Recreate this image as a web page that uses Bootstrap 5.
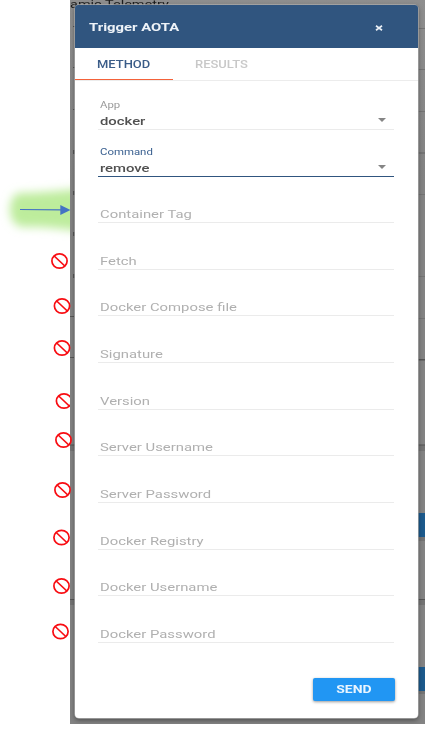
<!DOCTYPE html>
<html lang="en">
<head>
<meta charset="utf-8">
<meta name="viewport" content="width=device-width, initial-scale=1">
<title>Trigger AOTA</title>
<link rel="stylesheet" href="https://cdn.jsdelivr.net/npm/bootstrap@5.3.0/dist/css/bootstrap.min.css">
<style>
body{font-family:Roboto,"Liberation Sans",sans-serif;font-size:11px;line-height:1;background:#fff;width:437px;height:730px}
.backdrop-area{width:355px;height:724px;margin-left:70px;padding:5px 7px 0 4.5px;background:linear-gradient(#8e8e8e,#838383 25%,#838383)}
.stretch{display:inline-block;white-space:nowrap;transform:scaleX(1.35);transform-origin:0 50%}
.page-title{left:0;top:-1px;font-size:11.5px;color:#1c1c1c}
.page-title .stretch{transform:scaleX(1.26)}
.dialog-box{width:343px;height:712.5px;border-radius:4px;box-shadow:0 0 0 .7px #aaa,0 2px 5px rgba(0,0,0,.45)}
.dialog-head{height:43px;background:#30557f;color:#eef3f8;border-radius:3px 3px 0 0;padding:2px 35px 0 14px;font-weight:700}
.tab-strip{height:33px;border-bottom:1px solid #ececec}
.tab-item{width:98px;height:32px;color:#c8c8c8;font-weight:500}
.tab-item .stretch{transform:scaleX(1.18);transform-origin:50% 50%}
.send-btn .stretch{transform:scaleX(1.27);transform-origin:50% 50%}
.tab-item.active{color:#3a5c88;background:linear-gradient(#f4623a,#f4623a) bottom/100% 1px no-repeat}
.fields{padding:2.2px 24px 0 23px}
.field{height:46.67px;border-bottom:1px solid #ebebeb;padding:0 8px 2px 2px;color:#b0b0b0}
.field .caption{font-size:9.5px;color:#999;margin-bottom:6px;transform:scaleX(1.2)}
.field .val{color:#505050;font-weight:500}
.field.focused{border-bottom-color:#30557f}
.field.focused .caption{color:#3a6090}
.caret{border:4px solid transparent;border-top:4px solid #858585;border-bottom:0;margin-bottom:4.5px}
.send-btn{width:82px;height:23px;background:#2196f3;color:#e9f5ff;border-radius:2px;font-weight:700;box-shadow:0 1px 3px rgba(0,0,0,.4);margin:35px 23px 0 auto;border:0}
.marks{left:0;top:0}
.page-edge{left:0;top:0}
</style>
<script src="https://cdn.jsdelivr.net/npm/bootstrap@5.3.0/dist/js/bootstrap.bundle.min.js"></script>
</head>
<body class="position-relative overflow-hidden">
<main class="backdrop-area position-relative overflow-hidden">
  <svg class="page-edge position-absolute" width="355" height="724" aria-hidden="true">
    <g fill="#747474"><path d="M347 28h8v1h-8zM347 69h8v1h-8zM347 111h8v1h-8zM347 152h8v2h-8zM347 194h8v1h-8zM347 276h8v1h-8zM347 318h8v1h-8z"/>
    <path d="M0 445h5v6H0zM347 445h8v6h-8zM0 599h5v6H0zM347 599h8v6h-8zM347 537h8v4h-8zM347 691h8v3h-8z"/></g>
    <path fill="#555" d="M347 359h8v1.5h-8zM0 444.500h5v1H0zM347 444.500h8v1h-8zM0 599h5v1H0zM347 599h8v1h-8zM0 316h4v1H0zM0 357h4v1H0zM3 26h2v1H3zM3 67h2v1H3zM3 109h2v1H3zM3 150h2v4H3zM3 191h2v4H3zM3 232h2v4H3zM3 274h2v4H3z"/>
    <path fill="#1c5a8c" d="M347 513h8v24h-8zM347 667h8v24h-8z"/>
  </svg>
  <div class="page-title position-absolute"><span class="stretch">amic Telemetry</span></div>
  <section class="dialog-box bg-white position-relative">
    <header class="dialog-head d-flex align-items-center justify-content-between">
      <span class="stretch">Trigger AOTA</span>
      <svg width="8" height="6" viewBox="0 0 8 6" aria-label="Close"><path d="M1 .8 7 5.200M7 .8 1 5.200" stroke="#e8eef5" stroke-width="1.700"/></svg>
    </header>
    <nav class="tab-strip d-flex">
      <div class="tab-item active d-flex align-items-center justify-content-center"><span class="stretch">METHOD</span></div>
      <div class="tab-item d-flex align-items-center justify-content-center"><span class="stretch">RESULTS</span></div>
    </nav>
    <div class="fields">
      <div class="field d-flex align-items-end justify-content-between"><div class="d-flex flex-column"><span class="stretch caption">App</span><span class="stretch val">docker</span></div><span class="caret"></span></div>
      <div class="field focused d-flex align-items-end justify-content-between"><div class="d-flex flex-column"><span class="stretch caption">Command</span><span class="stretch val">remove</span></div><span class="caret"></span></div>
      <div class="field d-flex align-items-end"><span class="stretch">Container Tag</span></div>
      <div class="field d-flex align-items-end"><span class="stretch">Fetch</span></div>
      <div class="field d-flex align-items-end"><span class="stretch">Docker Compose file</span></div>
      <div class="field d-flex align-items-end"><span class="stretch">Signature</span></div>
      <div class="field d-flex align-items-end"><span class="stretch">Version</span></div>
      <div class="field d-flex align-items-end"><span class="stretch">Server Username</span></div>
      <div class="field d-flex align-items-end"><span class="stretch">Server Password</span></div>
      <div class="field d-flex align-items-end"><span class="stretch">Docker Registry</span></div>
      <div class="field d-flex align-items-end"><span class="stretch">Docker Username</span></div>
      <div class="field d-flex align-items-end"><span class="stretch">Docker Password</span></div>
    </div>
    <button class="send-btn d-flex align-items-center justify-content-center p-0"><span class="stretch">SEND</span></button>
  </section>
</main>
<svg class="marks position-absolute" width="75" height="730" aria-hidden="true">
  <defs>
    <filter id="soft" x="-30%" y="-50%" width="160%" height="200%"><feGaussianBlur stdDeviation="5"/></filter>
    <clipPath id="leftside"><path d="M0 0h70v730H0z"/></clipPath>
    <g id="ban" fill="none" stroke="#f80c12" stroke-width="1.700"><ellipse rx="7.600" ry="7.100"/><path d="M-5.300-5 5.300 5"/></g>
  </defs>
  <g clip-path="url(#leftside)"><path d="M20 193Q45 193 85 188V232Q45 226 22 227Q10 224 10 209Q11 194 20 193z" fill="#bdec9c" filter="url(#soft)"/></g>
  <path d="M20 209.500 62 209.800" stroke="#4472c4" stroke-width="1.200"/><path d="M60.300 205v10l10.200-5z" fill="#4472c4"/>
  <use href="#ban" x="59.500" y="261"/><use href="#ban" x="62" y="306"/><use href="#ban" x="62" y="348"/>
  <g clip-path="url(#leftside)"><use href="#ban" x="64" y="401"/></g>
  <use href="#ban" x="63.500" y="440"/><use href="#ban" x="62.500" y="490"/><use href="#ban" x="61.500" y="537.500"/><use href="#ban" x="61.500" y="586"/><use href="#ban" x="60.500" y="631.500"/>
</svg>
</body>
</html>
